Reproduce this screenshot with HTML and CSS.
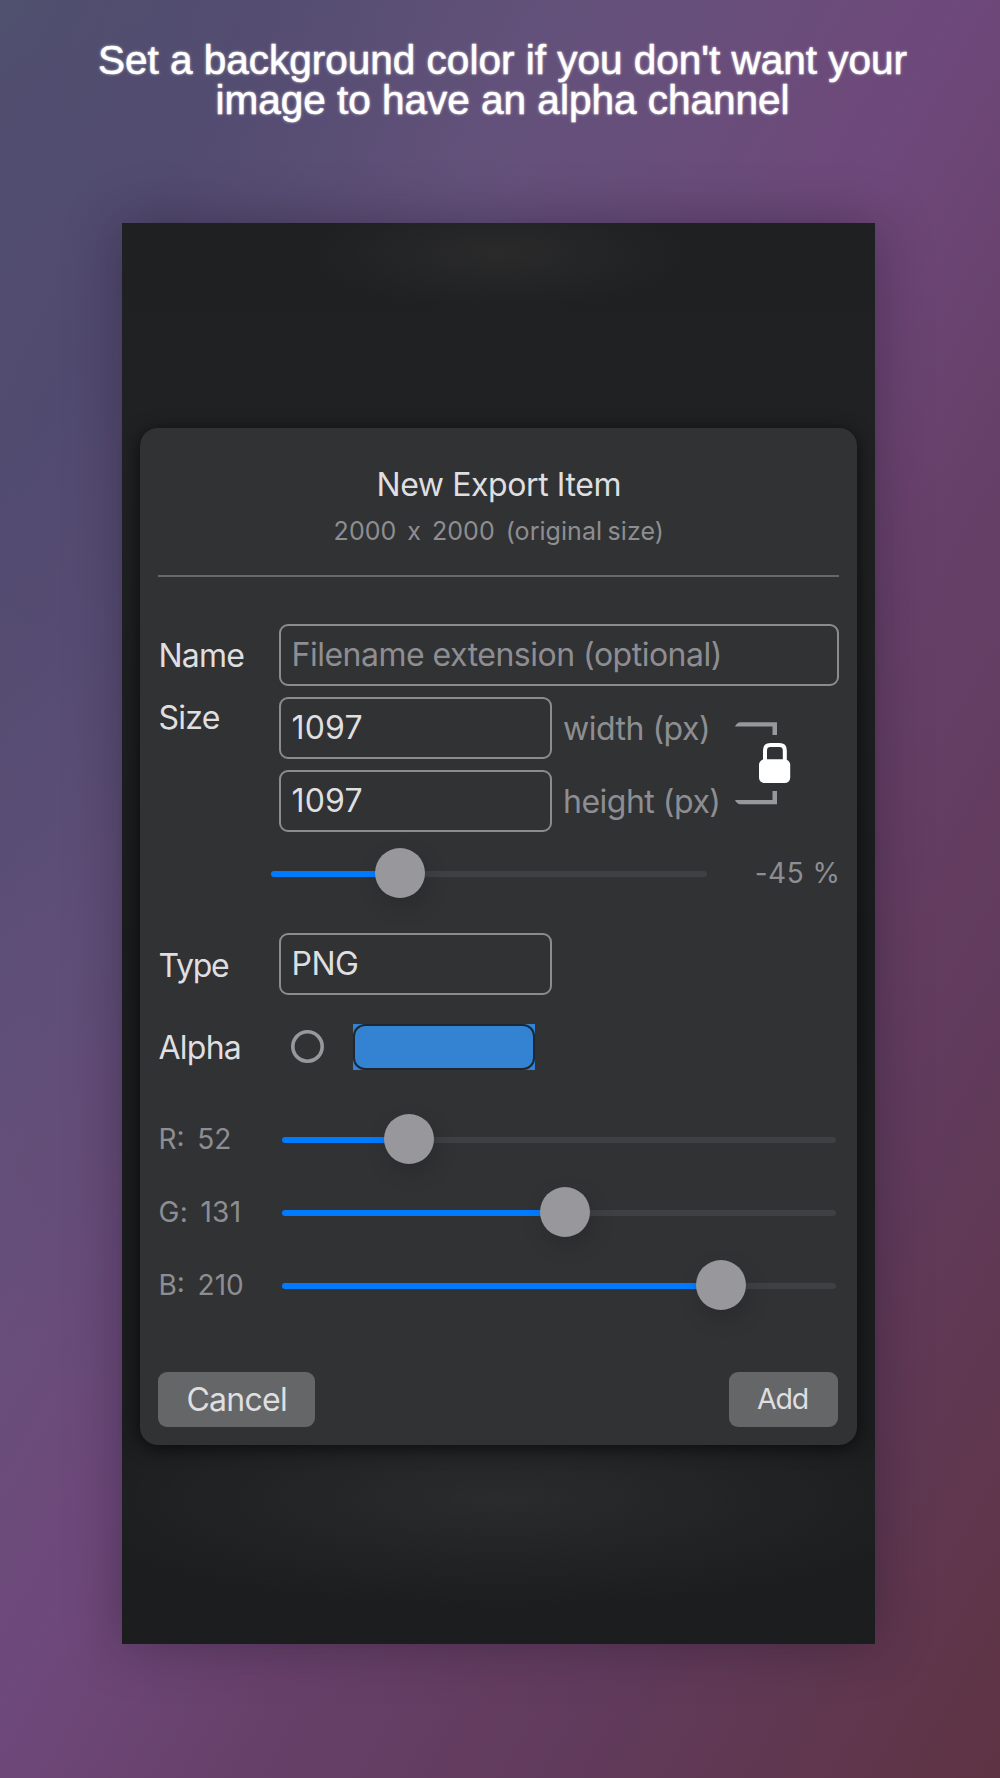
FILE: index.html
```html
<!DOCTYPE html>
<html lang="en">
<head>
<meta charset="utf-8">
<title>New Export Item</title>
<link rel="stylesheet" href="styles.css">
</head>
<body>
<main class="page">
  <h1 class="caption">Set a background color if you don't want your<br>image to have an alpha channel</h1>
  <div class="screen">
    <section class="card">
      <h2 class="title">New Export Item</h2>
      <p class="subtitle">2000  x  2000  (original size)</p>
      <hr class="divider">
      <div class="row name-row">
        <span class="label">Name</span>
        <div class="field placeholder">Filename extension (optional)</div>
      </div>
      <div class="row size-row">
        <span class="label">Size</span>
        <div class="size-grid">
          <div class="field number">1097</div>
          <span class="unit">width (px)</span>
          <svg class="lock" viewBox="733 720 60 86" width="60" height="86" aria-label="Aspect ratio locked">
            <path fill="#98979c" d="M735 726.6c1.2-2.4 3-4.3 5.6-4.3H777v12.8h-4.5v-8.5zM735 800h37.500v-9H777v13.200h-36.400c-2.600 0-4.400-1.800-5.600-4.200z"/>
            <path fill="none" stroke="#fff" stroke-width="4" d="M765 762v-11.500q0-5.400 5.400-5.400h9q5.400 0 5.400 5.400V762"/>
            <rect fill="#fff" x="759" y="759.300" width="31.200" height="23.700" rx="5.500"/>
          </svg>
          <div class="field number">1097</div>
          <span class="unit">height (px)</span>
        </div>
      </div>
      <div class="scale-row">
        <div class="slider"><i class="fill" style="width:29.5%"></i><i class="thumb"></i><i class="rest"></i></div>
        <span class="percent">-45 %</span>
      </div>
      <div class="row type-row">
        <span class="label label-type">Type</span>
        <div class="field short">PNG</div>
      </div>
      <div class="row alpha-row">
        <span class="label">Alpha</span>
        <div class="alpha-options">
          <svg class="radio" viewBox="0 0 33 33" width="33" height="33"><circle cx="16.500" cy="16.500" r="14.700" fill="none" stroke="#98979c" stroke-width="3.600"/></svg>
          <div class="swatch"><i></i></div>
        </div>
      </div>
      <div class="channels">
        <div class="channel">
          <span class="channel-label">R:  52</span>
          <div class="slider"><i class="fill" style="width:22.87%"></i><i class="thumb"></i><i class="rest"></i></div>
        </div>
        <div class="channel">
          <span class="channel-label green">G:  131</span>
          <div class="slider"><i class="fill" style="width:51.1%"></i><i class="thumb"></i><i class="rest"></i></div>
        </div>
        <div class="channel">
          <span class="channel-label">B:  210</span>
          <div class="slider"><i class="fill" style="width:79.3%"></i><i class="thumb"></i><i class="rest"></i></div>
        </div>
      </div>
      <div class="actions">
        <button class="button cancel">Cancel</button>
        <button class="button add">Add</button>
      </div>
    </section>
  </div>
</main>
</body>
</html>
```

FILE: styles.css
```css
* { box-sizing: border-box; }

body {
  margin: 0;
  font-family: Inter, "Liberation Sans", sans-serif;
  color: #dfdfe0;
}

.page {
  height: 1778px;
  padding-top: 39.500px;
  overflow: hidden;
  background:
    radial-gradient(ellipse 400px 1000px at 60px 380px, rgba(76, 70, 110, .5), transparent),
    linear-gradient(to bottom right, #51546f 0%, #564e72 14%, #64517b 30%, #6e487a 49%, #674069 62%, #613b5c 78%, #5e3343 100%);
}

.caption {
  margin: 0;
  height: 183.800px;
  padding-left: 5px;
  font: 400 40.5px/40.7px "Liberation Sans", Arial, sans-serif;
  text-align: center;
  color: #fff;
  text-shadow: 0 0 3px rgba(255, 255, 255, .75);
  -webkit-text-stroke: .5px #fff;
}

.screen {
  width: 753.200px;
  height: 1420.700px;
  margin-left: 122.200px;
  padding: 204.700px 18px 0 18px;
  background:
    radial-gradient(ellipse 190px 55px at 50% 30px, #2a2a2b, transparent),
    radial-gradient(ellipse 460px 110px at 50% 1275px, #2a2b2c, transparent),
    linear-gradient(#1f2021, #202122 15%, #1b1c1d 50%, #1c1d1e 100%);
  box-shadow: 0 0 50px rgba(25, 15, 35, .38);
}

.card {
  height: 1016.700px;
  padding: 37px 18.300px 0 18.300px;
  border-radius: 18px;
  background: #313234;
  box-shadow: 0 3px 18px rgba(0, 0, 0, .65);
}

.title {
  margin: 0;
  font-size: 32px;
  line-height: 40px;
  font-weight: 400;
  letter-spacing: -.41px;
  text-align: center;
}

.subtitle {
  margin: 10px 0 0;
  font-size: 25px;
  line-height: 32px;
  letter-spacing: .05px;
  word-spacing: -1.600px;
  text-align: center;
  white-space: pre;
  color: #8e8e92;
}

.divider {
  height: 2px;
  margin: 28px 0 0;
  border: 0;
  background: #68686a;
}

.row {
  display: grid;
  grid-template-columns: 120.500px 1fr;
}

.name-row { margin-top: 47px; }
.size-row { margin-top: 10.800px; }
.type-row { margin-top: 34px; }
.alpha-row { margin-top: 28.700px; }

.label {
  height: 62.300px;
  font-size: 32px;
  line-height: 64px;
  letter-spacing: -.75px;
}

.size-row .label { line-height: 41px; }
.label.label-type { line-height: 65px; letter-spacing: -1.2px; }
.alpha-row .label { height: 46px; line-height: 47.500px; }

.field {
  height: 62.300px;
  padding-left: 10.500px;
  border: 2px solid #8c8c8f;
  border-radius: 9px;
  font-size: 32px;
  line-height: 57px;
  letter-spacing: -.5px;
}

.field.placeholder { color: #8e8e92; }
.field.number { letter-spacing: .2px; }
.field.short { width: 273px; }

.size-grid {
  display: grid;
  grid-template-columns: 273px 181px 60px;
  row-gap: 10.300px;
}

.unit {
  height: 62.300px;
  padding-left: 11px;
  font-size: 32px;
  line-height: 64px;
  letter-spacing: -.5px;
  color: #8e8e92;
}

.lock {
  grid-column: 3;
  grid-row: 1 / 3;
  margin-top: 23.300px;
}

.scale-row {
  display: flex;
  align-items: center;
  justify-content: space-between;
  height: 50px;
  margin: 17px -1.500px 0 112.500px;
}

.scale-row .slider { width: 436px; }

.percent {
  font-size: 28px;
  letter-spacing: .5px;
  line-height: 46px;
  padding-bottom: 1px;
  color: #8e8e92;
}

.slider {
  display: flex;
  align-items: center;
  height: 50px;
}

.fill, .rest {
  flex: none;
  height: 6px;
  border-radius: 3px;
  background: #007bff;
}

.rest {
  flex: 1;
  background: #3f4043;
}

.thumb {
  flex: none;
  position: relative;
  z-index: 1;
  width: 50px;
  height: 50px;
  margin: -1px -25px 0;
  border-radius: 50%;
  background: #98979c;
  box-shadow: 3px 9px 22px rgba(0, 0, 0, .15);
}

.alpha-options {
  display: flex;
  align-items: center;
  padding-left: 12.300px;
}

.swatch {
  width: 182px;
  height: 46px;
  margin-left: 28.700px;
  background: #3483d2;
}

.swatch i {
  display: block;
  height: 100%;
  border: 2px solid #1c2733;
  border-radius: 12px;
}

.channels {
  display: grid;
  gap: 22.900px;
  margin-top: 45px;
}

.channel {
  display: grid;
  grid-template-columns: 123.500px 554px;
}

.channel-label {
  font-size: 28px;
  line-height: 48px;
  word-spacing: -1.500px;
  white-space: pre;
  color: #8e8e92;
}

.channel-label.green { letter-spacing: .3px; word-spacing: -2px; }

.actions {
  display: flex;
  justify-content: space-between;
  margin-top: 61px;
  padding-right: 1px;
}

.button {
  height: 55px;
  padding: 0;
  border: 0;
  border-radius: 9px;
  background: #656668;
  color: #dfdfe0;
  font-family: inherit;
}

.cancel {
  width: 156.500px;
  font-size: 32px;
  letter-spacing: -.72px;
}

.add {
  width: 109px;
  padding: 0 2px 1px 0;
  font-size: 28.500px;
  letter-spacing: -1.1px;
}
```
